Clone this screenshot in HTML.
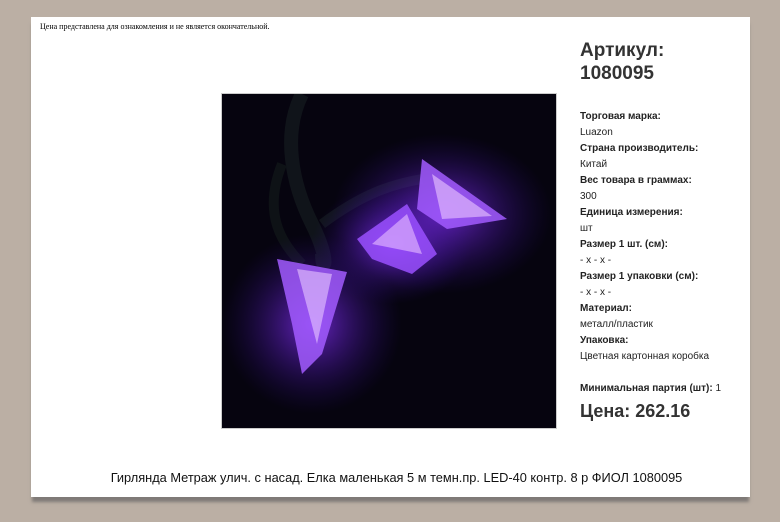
<!DOCTYPE html>
<html><head><meta charset="utf-8"><style>
html,body{margin:0;padding:0;}
body{width:780px;height:522px;background:#bbafa4;position:relative;overflow:hidden;font-family:"Liberation Sans",Arial,sans-serif;color:#222;}
.card{position:absolute;left:31px;top:17px;width:719px;height:480px;background:#fff;box-shadow:0 6px 3px -1px #7f7a77;}
.note{position:absolute;left:40px;top:22px;font-family:"Liberation Serif",serif;font-size:8px;color:#000;}
.img{position:absolute;left:221px;top:93px;width:334px;height:334px;border:1px solid #ccc;background:#06030d;overflow:hidden;}
.t{position:absolute;left:580px;font-size:10px;line-height:12px;color:#222;}
.b{font-weight:bold;}
.h{position:absolute;left:580px;font-weight:bold;font-size:19px;color:#333;}
.title{position:absolute;left:37px;width:719px;top:470px;text-align:center;font-size:12.8px;color:#111;}
</style></head><body>
<div class="card"></div>
<div class="note">Цена представлена для ознакомления и не является окончательной.</div>
<div class="img">
<svg width="334" height="334" viewBox="0 0 334 334">
<defs>
<radialGradient id="g" cx="50%" cy="50%" r="50%"><stop offset="0" stop-color="#8a30ff" stop-opacity="0.75"/><stop offset="1" stop-color="#2a0a80" stop-opacity="0"/></radialGradient>
</defs>
<rect width="334" height="334" fill="#06040f"/>
<path d="M80 0 C60 40 70 90 90 130 C110 170 100 180 100 160" stroke="#10141a" stroke-width="14" fill="none"/>
<path d="M60 70 C40 120 60 150 80 170" stroke="#0e1216" stroke-width="10" fill="none"/>
<path d="M100 130 C140 100 170 90 200 85" stroke="#10141a" stroke-width="10" fill="none"/>
<ellipse cx="90" cy="230" rx="90" ry="90" fill="url(#g)"/>
<ellipse cx="220" cy="120" rx="110" ry="80" fill="url(#g)"/>
<ellipse cx="170" cy="150" rx="80" ry="60" fill="url(#g)"/>
<path d="M55 165 L125 178 L100 260 L80 280 L70 230 Z" fill="#a25cff" opacity="0.85"/>
<path d="M75 175 L110 180 L95 250 Z" fill="#e8c8ff" opacity="0.6"/>
<path d="M200 65 L285 125 L225 135 L195 115 Z" fill="#a25cff" opacity="0.85"/>
<path d="M210 80 L270 122 L220 125 Z" fill="#ebc8ff" opacity="0.6"/>
<path d="M135 145 L185 110 L215 160 L190 180 L150 165 Z" fill="#9a50ff" opacity="0.85"/>
<path d="M150 150 L185 120 L200 160 Z" fill="#e8c0ff" opacity="0.6"/>
</svg>
</div>
<div class="h" style="top:40px">Артикул:</div>
<div class="h" style="top:63px">1080095</div>
<div class="t b" style="top:111px">Торговая марка:</div>
<div class="t" style="top:127px">Luazon</div>
<div class="t b" style="top:143px">Страна производитель:</div>
<div class="t" style="top:159px">Китай</div>
<div class="t b" style="top:175px">Вес товара в граммах:</div>
<div class="t" style="top:191px">300</div>
<div class="t b" style="top:207px">Единица измерения:</div>
<div class="t" style="top:223px">шт</div>
<div class="t b" style="top:239px">Размер 1 шт. (см):</div>
<div class="t" style="top:255px">- x - x -</div>
<div class="t b" style="top:271px">Размер 1 упаковки (см):</div>
<div class="t" style="top:287px">- x - x -</div>
<div class="t b" style="top:303px">Материал:</div>
<div class="t" style="top:319px">металл/пластик</div>
<div class="t b" style="top:335px">Упаковка:</div>
<div class="t" style="top:351px">Цветная картонная коробка</div>
<div class="t" style="top:383px"><b>Минимальная партия (шт):</b> 1</div>
<div class="h" style="top:401px;font-size:18px">Цена: 262.16</div>
<div class="title">Гирлянда Метраж улич. с насад. Елка маленькая 5 м темн.пр. LED-40 контр. 8 р ФИОЛ 1080095</div>
</body></html>
